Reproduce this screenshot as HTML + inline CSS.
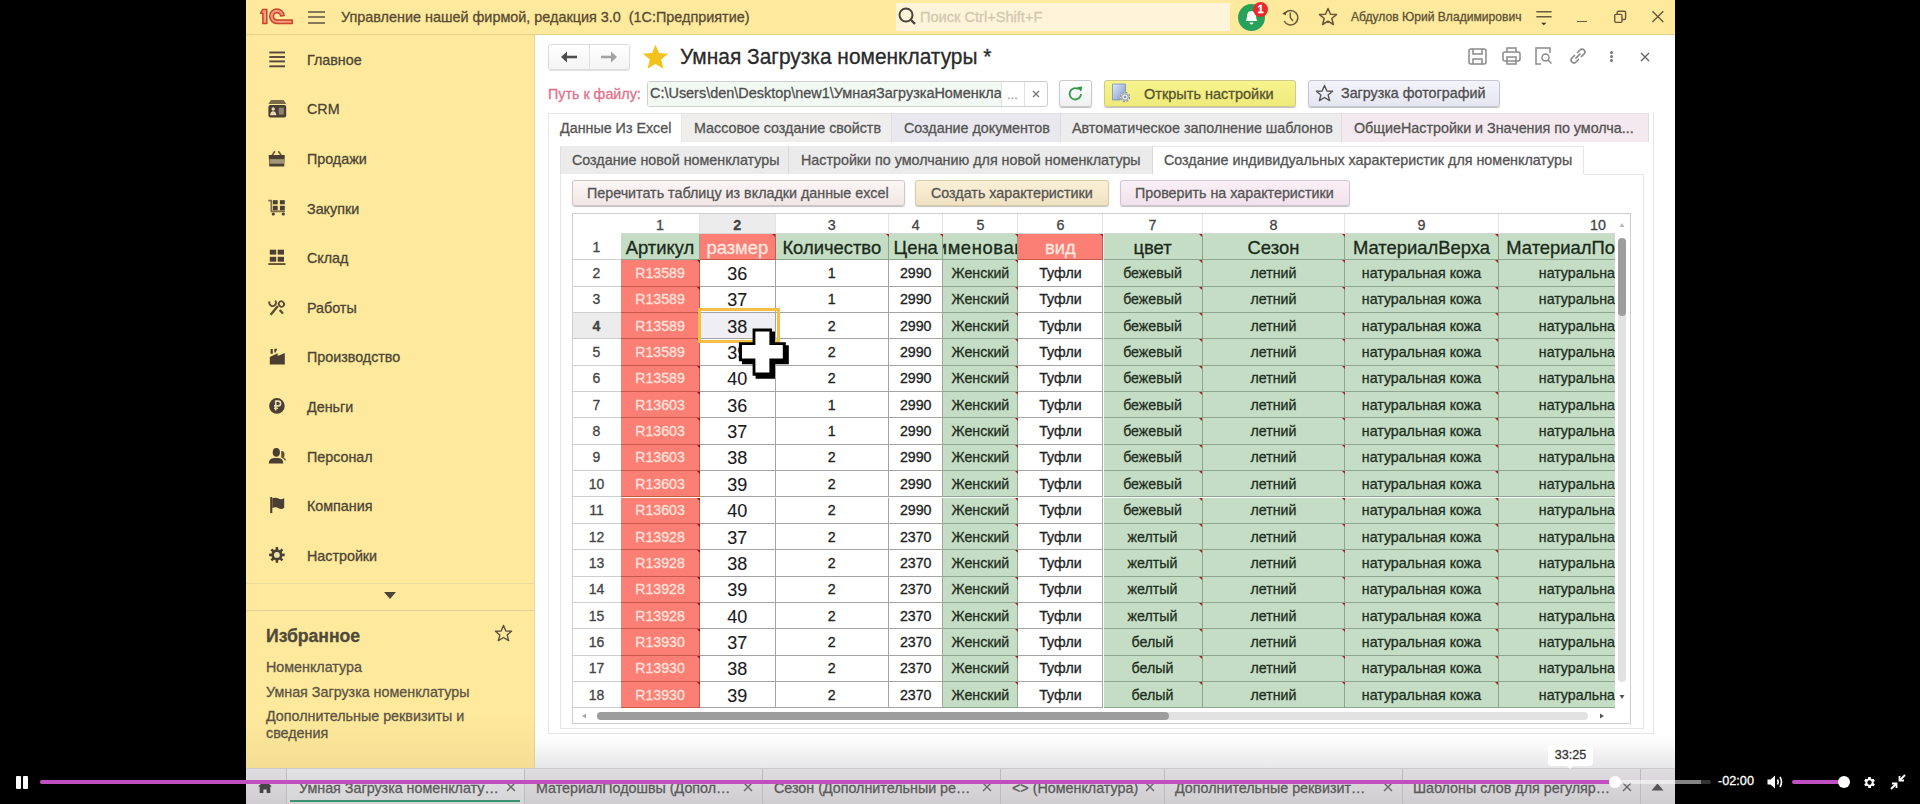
<!DOCTYPE html>
<html><head><meta charset="utf-8">
<style>
*{margin:0;padding:0;box-sizing:border-box}
html,body{width:1920px;height:804px;overflow:hidden;background:#000;font-family:"Liberation Sans",sans-serif;-webkit-text-stroke:0.3px currentColor}
.a{position:absolute}
#hdr{left:246px;top:0;width:1429px;height:34.6px;background:#fee99c;border-bottom:1.2px solid #e2d089}
#side{left:246px;top:35px;width:289px;height:733px;background:#fee99c;border-right:1px solid #e3d79f}
#main{left:535px;top:35px;width:1140px;height:733px;background:#fff}
.htxt{color:#5a5038;font-size:14.3px;white-space:nowrap}
.nav{position:absolute;left:307px;margin-top:1px;font-size:14.3px;color:#4a4535;white-space:nowrap}
.ico{position:absolute;left:268px;width:20px;height:20px}
.tab1{position:absolute;top:113px;height:29px;background:#ededed;border-right:1px solid #dedede;border-top:1px solid #e2e2e2;font-size:14.3px;color:#4d4d4d;white-space:nowrap;padding-top:6px}
.tab2{position:absolute;top:146px;height:28px;background:#ebebeb;border-right:1px solid #dadada;font-size:14.3px;color:#4d4d4d;white-space:nowrap;padding-top:6px}
.btn{position:absolute;height:26px;border:1px solid #c9c9c9;border-radius:3px;font-size:14.3px;color:#4d4d4d;white-space:nowrap;box-shadow:0 1px 1px rgba(0,0,0,.25)}
#tbl{left:572px;top:213.5px;width:1059px;height:511px;background:#fff;overflow:hidden}
#tblb{left:572px;top:213px;width:1059px;height:511px;border:1px solid #cfcfcf}
.mk{position:absolute;width:0;height:0;border-top:3.5px solid #a52125;border-left:3.5px solid transparent}
.mk2{border-top-color:#7a1a1a}
#grid{position:absolute;left:0;top:0;width:1045px;height:494px;overflow:hidden}
.ch{position:absolute;font-size:14.3px;color:#444;text-align:center;line-height:23px;border-right:1px solid #e4e4e4;border-bottom:1px solid #d6d6d6}
.rh{position:absolute;left:0;width:49px;font-size:14px;color:#444;display:flex;align-items:center;justify-content:center;border-bottom:1px solid #cfcfcf}
.hc,.dc{position:absolute;display:flex;align-items:center;justify-content:center;white-space:nowrap;overflow:hidden;border-right:1px solid #9aa39a;border-bottom:1px solid #9aa39a}
.hc{font-size:18.4px;color:#1a2a1a;padding-top:2px}
.hc.wt{color:#ffe8e0}
.dc{font-size:14.2px;color:#222}
.dc.ar{color:#ffe3dc}
.dc.big{font-size:18px;color:#1a1a1a;padding-top:3px;-webkit-text-stroke:0.1px currentColor}
.dc.gc{color:#1e2e1e}
.bt{position:absolute;top:780px;font-size:14.3px;color:#5a5a5a;white-space:nowrap}
.bx{top:782px;width:10px;height:10px;fill:none;stroke:#666;stroke-width:1.4}
.tb{position:absolute;font-size:14.3px;color:#545454;white-space:nowrap}
</style></head><body>
<!-- header -->
<div id="hdr" class="a"></div>
<svg class="a" style="left:255px;top:4px" width="45" height="26" viewBox="0 0 45 26"><g fill="#fb9b7f" stroke="#c7452a" stroke-width="1.5" stroke-linejoin="round"><path d="M7.9 19.6 V9.2 H5.6 L7.7 5.4 H11.8 V19.6Z"/><path d="M29.1 11.6 A7.2 7.2 0 1 0 21.9 19.4 H37.2 V15.9 H22 A3.6 3.6 0 1 1 25.6 12Z"/></g></svg>
<div class="a" style="left:308px;top:11px;width:17px;height:2px;background:#85795a"></div>
<div class="a" style="left:308px;top:16px;width:17px;height:2px;background:#85795a"></div>
<div class="a" style="left:308px;top:22px;width:17px;height:2px;background:#85795a"></div>
<div class="a htxt" style="left:341px;top:9px;color:#564b32;font-size:14.4px">Управление нашей фирмой, редакция 3.0&nbsp; (1С:Предприятие)</div>
<div class="a" style="left:896px;top:3px;width:334px;height:28px;background:#fdf4da"></div>
<svg class="a" style="left:898px;top:7px" width="20" height="20" viewBox="0 0 20 20"><circle cx="8" cy="8" r="6.5" fill="none" stroke="#4a4438" stroke-width="2"/><path d="M13 13 L17 17" stroke="#4a4438" stroke-width="2.4"/></svg>
<div class="a htxt" style="left:920px;top:9px;font-size:14.6px;color:#d3c9b0">Поиск Ctrl+Shift+F</div>
<!-- bell -->
<div class="a" style="left:1238px;top:4px;width:27px;height:27px;border-radius:50%;background:#27a25a"></div>
<svg class="a" style="left:1243px;top:9px" width="17" height="17" viewBox="0 0 17 17"><path d="M8.5 2 C5 2 4 5 4 8 L3 12 H14 L13 8 C13 5 12 2 8.5 2Z M6.5 13.5 H10.5 A2 2 0 0 1 6.5 13.5Z" fill="#fff"/></svg>
<div class="a" style="left:1253px;top:2px;width:15px;height:15px;border-radius:50%;background:#e8282b;color:#fff;font-size:11px;font-weight:bold;text-align:center;line-height:15px">1</div>
<svg class="a" style="left:1280px;top:7px" width="21" height="21" viewBox="0 0 21 21"><path d="M4.2 14 A7.2 7.2 0 1 0 5 6.2" fill="none" stroke="#6a5c3c" stroke-width="1.6"/><path d="M2.2 6.8 L5.6 4.6 L5.9 8.2Z" fill="#5a4c30"/><path d="M10.3 5.6 V10.6 L13 14" fill="none" stroke="#6a5c3c" stroke-width="1.5"/></svg>
<svg class="a" style="left:1318px;top:7px" width="20" height="20" viewBox="0 0 20 20"><path d="M10 1.5 L12.5 7.3 L18.5 7.6 L13.8 11.5 L15.4 17.5 L10 14.2 L4.6 17.5 L6.2 11.5 L1.5 7.6 L7.5 7.3Z" fill="none" stroke="#66573a" stroke-width="1.5" stroke-linejoin="round"/></svg>
<div class="a htxt" style="left:1351px;top:10px;font-size:12.1px;color:#5c5236">Абдулов Юрий Владимирович</div>
<svg class="a" style="left:1535px;top:8px" width="18" height="20" viewBox="0 0 18 20"><path d="M1.3 3.7 H16.6 M1.3 8.8 H16.6" stroke="#6a5c3c" stroke-width="1.4"/><path d="M6.2 14.7 H11.4 L8.8 17.2Z" fill="#3e3424"/></svg>
<div class="a" style="left:1577px;top:20.7px;width:10.2px;height:1.7px;background:#6a5c3c"></div>
<svg class="a" style="left:1612px;top:9px" width="16" height="16" viewBox="0 0 16 16" fill="none" stroke="#65573a" stroke-width="1.4"><rect x="2.7" y="5.4" width="7.3" height="8" rx="1.3"/><path d="M5.2 5.2 V3.4 Q5.2 2.2 6.4 2.2 H12.4 Q13.6 2.2 13.6 3.4 V9.3 Q13.6 10.5 12.4 10.5 H10.2"/></svg>
<svg class="a" style="left:1651px;top:10px" width="14" height="13" viewBox="0 0 14 13"><path d="M1.4 1.3 L12.3 11.9 M12.3 1.3 L1.4 11.9" stroke="#65573a" stroke-width="1.4"/></svg>

<!-- sidebar -->
<div id="side" class="a"></div>
<div class="nav" style="top:51px">Главное</div>
<div class="nav" style="top:100px">CRM</div>
<div class="nav" style="top:150px">Продажи</div>
<div class="nav" style="top:200px">Закупки</div>
<div class="nav" style="top:249px">Склад</div>
<div class="nav" style="top:299px">Работы</div>
<div class="nav" style="top:348px">Производство</div>
<div class="nav" style="top:398px">Деньги</div>
<div class="nav" style="top:448px">Персонал</div>
<div class="nav" style="top:497px">Компания</div>
<div class="nav" style="top:547px">Настройки</div>
<!-- sidebar icons -->
<svg class="ico" style="top:49px" viewBox="0 0 20 20" fill="#54483a"><rect x="1.3" y="2.55" width="15.7" height="1.9"/><rect x="1.3" y="7.05" width="15.7" height="1.9"/><rect x="1.3" y="11.45" width="15.7" height="1.9"/><rect x="1.3" y="16.35" width="15.7" height="1.9"/></svg>
<svg class="ico" style="top:99px" viewBox="0 0 20 20"><path d="M3 0.9 H15.6 L18.2 5 H0.4Z" fill="#7a6a48"/><rect x="0.4" y="6" width="17.8" height="12.4" rx="2" fill="#4a3f32"/><circle cx="5.2" cy="10" r="1.7" fill="#e6ddb4"/><path d="M2 16.2 Q2.5 12.3 5.2 12.3 Q7.9 12.3 8.4 16.2Z" fill="#e6ddb4"/><rect x="10.8" y="8.6" width="5" height="7" fill="#8e8474"/></svg>
<svg class="ico" style="top:149px" viewBox="0 0 20 20"><path d="M4.2 6.3 L6.9 2.3 M10.4 2.3 L13.1 6.3" stroke="#6e5e3a" stroke-width="1.7" fill="none"/><path d="M0.7 6 H16.8 L16.2 17.6 H1.3Z" fill="#4a3f32"/><rect x="1.5" y="10.1" width="14.5" height="4.6" fill="#a39674"/></svg>
<svg class="ico" style="top:198px" viewBox="0 0 20 20"><path d="M0.3 2.6 H3.3 V13.4 H17" stroke="#7d6c48" stroke-width="1.6" fill="none"/><g fill="#4a3f32"><rect x="4.8" y="2.2" width="4.9" height="4.1"/><rect x="11.9" y="2.2" width="4.9" height="4.1"/><rect x="4.8" y="7.8" width="4.9" height="4.5"/><rect x="11.9" y="7.8" width="4.9" height="4.5"/><circle cx="5.3" cy="16" r="1.6"/><circle cx="15.3" cy="16" r="1.6"/></g></svg>
<svg class="ico" style="top:247px" viewBox="0 0 20 20" fill="#4a3f32"><rect x="1.8" y="2.7" width="6.4" height="4.9"/><rect x="9.7" y="2.7" width="6.3" height="4.9"/><rect x="1.8" y="9.8" width="6.4" height="4.9"/><rect x="9.7" y="9.8" width="6.3" height="4.9"/><rect x="0.3" y="16.1" width="17.2" height="1.9" fill="#65552f"/></svg>
<svg class="ico" style="top:297px" viewBox="0 0 20 20" fill="none" stroke="#5a4c34" stroke-width="1.8"><path d="M1.6 4.3 A3.3 3.3 0 1 0 7.2 3.6"/><ellipse cx="13.4" cy="7" rx="2.5" ry="2.8" transform="rotate(-40 13.4 7)"/><path d="M2.6 17.8 L9.9 9" stroke-width="2.4"/><path d="M11.6 12.9 L15 16.6" stroke-width="2.2"/></svg>
<svg class="ico" style="top:346px" viewBox="0 0 20 20" fill="#4a3f32"><path d="M1.8 18.4 V11 L9.7 7.3 V10 L16.8 7 V18.4Z"/><path d="M2.6 3 H4.8 V7.8 H2.6Z"/><path d="M6.4 2.7 H9.2 L7.6 6.6 H6.4Z"/></svg>
<svg class="ico" style="top:396px" viewBox="0 0 20 20"><circle cx="8.9" cy="9.9" r="7.8" fill="#4a3f32"/><path d="M7.7 14.6 V5.1 H10.2 A2.4 2.4 0 0 1 10.2 9.9 H6 M6 12.3 H10" fill="none" stroke="#e6ddb4" stroke-width="1.6"/></svg>
<svg class="ico" style="top:446px" viewBox="0 0 20 20" fill="#4a3f32"><ellipse cx="8.3" cy="6.3" rx="3.6" ry="4.4"/><path d="M0.7 17.4 Q0.9 12.2 6 11.9 H10.6 Q15.1 12.2 15.3 17.4Z"/><path d="M13.2 5.2 Q16.3 4.6 16.5 8.4 Q16.5 11 15.5 11.6 Q17.6 12.6 18.3 14.2 L16.9 14.6 Q15.6 12.4 13.2 11.6Z" fill="#5e5034"/></svg>
<svg class="ico" style="top:495px" viewBox="0 0 20 20" fill="#4a3f32"><rect x="2.2" y="2.1" width="2.1" height="16"/><path d="M4.3 3.3 Q8 2 10.5 3.6 Q13.5 5.2 16.2 3 V12.7 Q13.5 14.8 10.5 13.2 Q8 11.6 4.3 13Z"/></svg>
<svg class="ico" style="top:545px" viewBox="0 0 20 20"><g fill="#4a3f32" transform="translate(8.9 9.9)"><circle r="5.6"/><rect x="-1.3" y="-7.8" width="2.6" height="15.6"/><rect x="-1.3" y="-7.8" width="2.6" height="15.6" transform="rotate(45)"/><rect x="-1.3" y="-7.8" width="2.6" height="15.6" transform="rotate(90)"/><rect x="-1.3" y="-7.8" width="2.6" height="15.6" transform="rotate(135)"/></g><circle cx="8.9" cy="9.9" r="2.9" fill="#efe2b0"/></svg>
<div class="a" style="left:246px;top:583px;width:288px;height:1px;background:#eadb9a"></div>
<svg class="a" style="left:383px;top:591px" width="14" height="9" viewBox="0 0 14 9"><path d="M1 1 H13 L7 8Z" fill="#4a4436"/></svg>
<div class="a" style="left:246px;top:610px;width:288px;height:1px;background:#ddd09a"></div>
<div class="a" style="left:266px;top:626px;font-size:17.6px;font-weight:bold;color:#4e493b;white-space:nowrap">Избранное</div>
<svg class="a" style="left:494px;top:624px" width="19" height="19" viewBox="0 0 20 20"><path d="M10 1.5 L12.5 7.3 L18.5 7.6 L13.8 11.5 L15.4 17.5 L10 14.2 L4.6 17.5 L6.2 11.5 L1.5 7.6 L7.5 7.3Z" fill="none" stroke="#5b5242" stroke-width="1.5" stroke-linejoin="round"/></svg>
<div class="a" style="left:266px;top:659px;font-size:14.3px;color:#5a5444;white-space:nowrap">Номенклатура</div>
<div class="a" style="left:266px;top:684px;font-size:14.3px;color:#5a5444;white-space:nowrap">Умная Загрузка номенклатуры</div>
<div class="a" style="left:266px;top:708px;font-size:14.3px;color:#5a5444;white-space:nowrap;line-height:17px">Дополнительные реквизиты и<br>сведения</div>

<!-- main -->
<div id="main" class="a"></div>
<div class="a" style="left:548px;top:44px;width:82px;height:26px;border:1px solid #dcdcdc;border-radius:3px;background:linear-gradient(#fff,#f4f4f4);box-shadow:0 1px 1px rgba(0,0,0,.12)"></div>
<div class="a" style="left:589px;top:45px;width:1px;height:25px;background:#e0e0e0"></div>
<svg class="a" style="left:560px;top:50px" width="18" height="14" viewBox="0 0 18 14"><path d="M17 7 H5" stroke="#4d4d4d" stroke-width="2.6"/><path d="M1 7 L7 1.5 V12.5Z" fill="#4d4d4d"/></svg>
<svg class="a" style="left:600px;top:50px" width="18" height="14" viewBox="0 0 18 14"><path d="M1 7 H13" stroke="#a3a3a3" stroke-width="2.6"/><path d="M17 7 L11 1.5 V12.5Z" fill="#a3a3a3"/></svg>
<svg class="a" style="left:642px;top:44px" width="27" height="26" viewBox="0 0 20 19"><path d="M10 0.5 L12.6 6.6 L19.3 7 L14.2 11.4 L15.9 18.2 L10 14.6 L4.1 18.2 L5.8 11.4 L0.7 7 L7.4 6.6Z" fill="#f4c21c"/></svg>
<div class="a" style="left:680px;top:43.5px;font-size:21.9px;color:#2a2a2a;white-space:nowrap;transform:scaleX(0.955);transform-origin:0 0">Умная Загрузка номенклатуры *</div>
<!-- toolbar icons -->
<svg class="a" style="left:1468px;top:48px" width="19" height="17" viewBox="0 0 19 17" fill="none" stroke="#8a8a8a" stroke-width="1.5"><rect x="1" y="1" width="17" height="15" rx="2"/><path d="M5 1 V6 H14 V1"/><path d="M5 16 V11 H14 V16"/></svg>
<svg class="a" style="left:1502px;top:47px" width="19" height="18" viewBox="0 0 19 18" fill="none" stroke="#8a8a8a" stroke-width="1.5"><rect x="1" y="5" width="17" height="9" rx="2"/><path d="M5 5 V1 H14 V5"/><rect x="5" y="10" width="9" height="7"/></svg>
<svg class="a" style="left:1535px;top:47px" width="18" height="18" viewBox="0 0 18 18" fill="none" stroke="#8a8a8a" stroke-width="1.5"><path d="M6 17 H1 V1 H15 V6"/><circle cx="10.5" cy="10.5" r="3.5"/><path d="M13 13 L16.5 16.5"/></svg>
<svg class="a" style="left:1569px;top:47px" width="18" height="18" viewBox="0 0 18 18" fill="none" stroke="#8a8a8a" stroke-width="1.7"><path d="M8 6 L11 3 A2.8 2.8 0 0 1 15 7 L12 10"/><path d="M10 12 L7 15 A2.8 2.8 0 0 1 3 11 L6 8"/><path d="M6.5 11.5 L11.5 6.5"/></svg>
<div class="a" style="left:1609.5px;top:50.5px;width:3.5px;height:3.5px;border-radius:50%;background:#777"></div>
<div class="a" style="left:1609.5px;top:54.5px;width:3.5px;height:3.5px;border-radius:50%;background:#777"></div>
<div class="a" style="left:1609.5px;top:58.5px;width:3.5px;height:3.5px;border-radius:50%;background:#777"></div>
<svg class="a" style="left:1640px;top:52px" width="10" height="10" viewBox="0 0 10 10"><path d="M1 1 L9 9 M9 1 L1 9" stroke="#666" stroke-width="1.4"/></svg>

<!-- path row -->
<div class="a" style="left:548px;top:86px;font-size:14.3px;color:#e2708a;white-space:nowrap">Путь к файлу:</div>
<div class="a" style="left:647px;top:81px;width:401px;height:26px;border:1px solid #cfcfcf;border-radius:3px;background:#fff"></div>
<div class="a" style="left:648px;top:82px;width:353px;height:24px;background:#f2f8f2;overflow:hidden;font-size:14.45px;color:#4e4e4e;white-space:nowrap;padding:3px 0 0 2px">C:\Users\den\Desktop\new1\УмнаяЗагрузкаНоменклатуры.xlsx</div>
<div class="a" style="left:1001px;top:82px;width:1px;height:24px;background:#e0e0e0"></div>
<div class="a" style="left:1024px;top:82px;width:1px;height:24px;background:#e0e0e0"></div>
<div class="a" style="left:1007px;top:87px;font-size:13px;color:#aaa">...</div>
<svg class="a" style="left:1031px;top:89px" width="10" height="10" viewBox="0 0 10 10"><path d="M2 2 L8 8 M8 2 L2 8" stroke="#777" stroke-width="1.3"/></svg>
<div class="btn" style="left:1059px;top:79.5px;width:33px;height:27.5px;background:linear-gradient(#fff,#f0f0f0)"></div>
<svg class="a" style="left:1066px;top:84px" width="19" height="19" viewBox="0 0 19 19"><path d="M15 10 A5.7 5.7 0 1 1 12.6 5.2" fill="none" stroke="#3a9e4e" stroke-width="1.9"/><path d="M11 3.2 L16.2 2.6 L15.2 7.8Z" fill="#2f9444"/></svg>
<div class="btn" style="left:1104px;top:79.5px;width:192px;height:27.5px;background:linear-gradient(#f8f48f,#eeea7a);border-color:#cfc98a"></div>
<svg class="a" style="left:1111px;top:83px" width="20" height="20" viewBox="0 0 20 20"><defs><linearGradient id="gb" x1="0" y1="0" x2="1" y2="1"><stop offset="0" stop-color="#dfe8f8"/><stop offset="1" stop-color="#7d96c8"/></linearGradient></defs><path d="M1.5 1 H14.5 V11 A5 5 0 0 0 9 17 H1.5Z" fill="url(#gb)" stroke="#7a8fb8" stroke-width="0.8"/><g transform="translate(14 14)"><circle r="4.6" fill="#d8dce2" stroke="#8c939c" stroke-width="1.1" stroke-dasharray="2 1.6"/><circle r="3.3" fill="#e6e9ee" stroke="#8c939c" stroke-width="0.9"/><circle r="1.2" fill="#8c939c"/></g></svg>
<div class="a" style="left:1144px;top:85.5px;font-size:14.5px;color:#56532e;white-space:nowrap">Открыть настройки</div>
<div class="btn" style="left:1308px;top:79.5px;width:192px;height:27.5px;background:linear-gradient(#f4f4fb,#e6e6f2);border-color:#c6c6d4"></div>
<svg class="a" style="left:1315px;top:84px" width="19" height="19" viewBox="0 0 20 20"><path d="M10 1.5 L12.5 7.3 L18.5 7.6 L13.8 11.5 L15.4 17.5 L10 14.2 L4.6 17.5 L6.2 11.5 L1.5 7.6 L7.5 7.3Z" fill="none" stroke="#555" stroke-width="1.5" stroke-linejoin="round"/></svg>
<div class="a" style="left:1341px;top:85px;font-size:14.3px;color:#4d4d4d;white-space:nowrap">Загрузка фотографий</div>

<!-- outer tabs -->
<div class="a" style="left:548px;top:113px;width:1106px;height:621px;border:1px solid #e6e6e6;border-top:none"></div>
<div class="tab1" style="left:548px;width:134px;background:#fff;border:1px solid #e6e6e6;border-bottom:none"></div>
<div class="tab1" style="left:682px;width:210px;background:#efeeed"></div>
<div class="tab1" style="left:892px;width:169px;background:#eae8ef"></div>
<div class="tab1" style="left:1061px;width:281px"></div>
<div class="tab1" style="left:1342px;width:307px;background:#f3e9ee"></div>
<div class="tb" style="left:560px;top:119.5px">Данные Из Excel</div>
<div class="tb" style="left:694px;top:119.5px">Массовое создание свойств</div>
<div class="tb" style="left:904px;top:119.5px">Создание документов</div>
<div class="tb" style="left:1072px;top:119.5px">Автоматическое заполнение шаблонов</div>
<div class="tb" style="left:1354px;top:119.5px">ОбщиеНастройки и Значения по умолча...</div>

<!-- inner tabs -->
<div class="a" style="left:560px;top:174px;width:1084px;height:555px;border:1px solid #e6e6e6;border-top:none"></div>
<div class="a" style="left:1584px;top:174px;width:60px;height:1px;background:#e6e6e6"></div>
<div class="tab2" style="left:560px;width:229px;border-left:1px solid #e0e0e0"></div>
<div class="tab2" style="left:789px;width:364px"></div>
<div class="tab2" style="left:1153px;width:431px;background:#fff;border-top:1px solid #e6e6e6;border-right:1px solid #e6e6e6"></div>
<div class="tb" style="left:572px;top:152px">Создание новой номенклатуры</div>
<div class="tb" style="left:801px;top:152px">Настройки по умолчанию для новой номенклатуры</div>
<div class="tb" style="left:1164px;top:152px">Создание индивидуальных характеристик для номенклатуры</div>

<!-- action buttons -->
<div class="btn" style="left:572px;top:179.5px;height:26.5px;width:333px;background:linear-gradient(#fdf6f6,#f1e6e6);border-color:#d0c8c8"></div>
<div class="tb" style="left:587px;top:185px">Перечитать таблицу из вкладки данные excel</div>
<div class="btn" style="left:915px;top:179.5px;height:26.5px;width:194px;background:linear-gradient(#fbf0d8,#f0e2c2);border-color:#d8cba8"></div>
<div class="tb" style="left:931px;top:185px">Создать характеристики</div>
<div class="btn" style="left:1120px;top:179.5px;height:26.5px;width:230px;background:linear-gradient(#fbf0f6,#f0e2ec);border-color:#d4c6d0"></div>
<div class="tb" style="left:1135px;top:185px">Проверить на характеристики</div>

<!-- table -->
<div id="tbl" class="a">
<div id="grid">
<div class="ch" style="left:49.0px;top:0;width:79.0px;height:20.5px;background:#fff;font-weight:normal">1</div>
<div class="ch" style="left:128.0px;top:0;width:75.6px;height:20.5px;background:#ececec;font-weight:bold">2</div>
<div class="ch" style="left:203.6px;top:0;width:113.4px;height:20.5px;background:#fff;font-weight:normal">3</div>
<div class="ch" style="left:317.0px;top:0;width:54.4px;height:20.5px;background:#fff;font-weight:normal">4</div>
<div class="ch" style="left:371.4px;top:0;width:75.0px;height:20.5px;background:#fff;font-weight:normal">5</div>
<div class="ch" style="left:446.4px;top:0;width:85.1px;height:20.5px;background:#fff;font-weight:normal">6</div>
<div class="ch" style="left:531.5px;top:0;width:99.0px;height:20.5px;background:#fff;font-weight:normal">7</div>
<div class="ch" style="left:630.5px;top:0;width:142.9px;height:20.5px;background:#fff;font-weight:normal">8</div>
<div class="ch" style="left:773.4px;top:0;width:153.2px;height:20.5px;background:#fff;font-weight:normal">9</div>
<div class="ch" style="left:926.6px;top:0;width:116.4px;height:20.5px;background:#fff;font-weight:normal;text-align:right;padding-right:9px;box-sizing:border-box;border-right:none">10</div>
<div class="rh" style="top:20.50px;height:26.35px;background:#fff;">1</div>
<div class="hc" style="left:49.0px;top:20.50px;width:79.0px;height:26.35px;background:#c5ddc4;border-color:#8ea58e"><span>Артикул</span></div>
<div class="hc wt" style="left:128.0px;top:20.50px;width:75.6px;height:26.35px;background:#fc7f75;border-color:#c8574c"><span>размер</span></div>
<div class="hc" style="left:203.6px;top:20.50px;width:113.4px;height:26.35px;background:#c5ddc4;border-color:#8ea58e"><span>Количество</span></div>
<div class="hc" style="left:317.0px;top:20.50px;width:54.4px;height:26.35px;background:#c5ddc4;border-color:#8ea58e"><span>Цена</span></div>
<div class="hc" style="left:371.4px;top:20.50px;width:75.0px;height:26.35px;background:#c5ddc4;border-color:#8ea58e"><span style="margin-left:-2px;letter-spacing:0.6px">Наименование</span></div>
<div class="hc wt" style="left:446.4px;top:20.50px;width:85.1px;height:26.35px;background:#fc7f75;border-color:#c8574c"><span>вид</span></div>
<div class="hc" style="left:531.5px;top:20.50px;width:99.0px;height:26.35px;background:#c5ddc4;border-color:#8ea58e"><span>цвет</span></div>
<div class="hc" style="left:630.5px;top:20.50px;width:142.9px;height:26.35px;background:#c5ddc4;border-color:#8ea58e"><span>Сезон</span></div>
<div class="hc" style="left:773.4px;top:20.50px;width:153.2px;height:26.35px;background:#c5ddc4;border-color:#8ea58e"><span>МатериалВерха</span></div>
<div class="hc" style="left:926.6px;top:20.50px;width:116.4px;height:26.35px;background:#c5ddc4;border-color:#8ea58e;justify-content:flex-end;border-right:none"><span>МатериалПо</span></div>
<div class="rh" style="top:46.85px;height:26.35px;background:#fff;">2</div>
<div class="dc ar" style="left:49.0px;top:46.85px;width:79.0px;height:26.35px;background:#fc7f75;border-color:#c8574c"><span>R13589</span></div>
<div class="dc big" style="left:128.0px;top:46.85px;width:75.6px;height:26.35px;background:#ffffff;border-color:#a4a4a4"><span>36</span></div>
<div class="dc" style="left:203.6px;top:46.85px;width:113.4px;height:26.35px;background:#ffffff;border-color:#a4a4a4"><span>1</span></div>
<div class="dc" style="left:317.0px;top:46.85px;width:54.4px;height:26.35px;background:#ffffff;border-color:#a4a4a4"><span>2990</span></div>
<div class="dc gc" style="left:371.4px;top:46.85px;width:75.0px;height:26.35px;background:#c5ddc4;border-color:#8ea58e"><span>Женский</span></div>
<div class="dc" style="left:446.4px;top:46.85px;width:85.1px;height:26.35px;background:#ffffff;border-color:#a4a4a4"><span>Туфли</span></div>
<div class="dc gc" style="left:531.5px;top:46.85px;width:99.0px;height:26.35px;background:#c5ddc4;border-color:#8ea58e"><span>бежевый</span></div>
<div class="dc gc" style="left:630.5px;top:46.85px;width:142.9px;height:26.35px;background:#c5ddc4;border-color:#8ea58e"><span>летний</span></div>
<div class="dc gc" style="left:773.4px;top:46.85px;width:153.2px;height:26.35px;background:#c5ddc4;border-color:#8ea58e"><span>натуральная кожа</span></div>
<div class="dc gc" style="left:926.6px;top:46.85px;width:116.4px;height:26.35px;background:#c5ddc4;border-color:#8ea58e;justify-content:flex-end;border-right:none"><span>натуральна</span></div>
<div class="rh" style="top:73.20px;height:26.35px;background:#fff;">3</div>
<div class="dc ar" style="left:49.0px;top:73.20px;width:79.0px;height:26.35px;background:#fc7f75;border-color:#c8574c"><span>R13589</span></div>
<div class="dc big" style="left:128.0px;top:73.20px;width:75.6px;height:26.35px;background:#ffffff;border-color:#a4a4a4"><span>37</span></div>
<div class="dc" style="left:203.6px;top:73.20px;width:113.4px;height:26.35px;background:#ffffff;border-color:#a4a4a4"><span>1</span></div>
<div class="dc" style="left:317.0px;top:73.20px;width:54.4px;height:26.35px;background:#ffffff;border-color:#a4a4a4"><span>2990</span></div>
<div class="dc gc" style="left:371.4px;top:73.20px;width:75.0px;height:26.35px;background:#c5ddc4;border-color:#8ea58e"><span>Женский</span></div>
<div class="dc" style="left:446.4px;top:73.20px;width:85.1px;height:26.35px;background:#ffffff;border-color:#a4a4a4"><span>Туфли</span></div>
<div class="dc gc" style="left:531.5px;top:73.20px;width:99.0px;height:26.35px;background:#c5ddc4;border-color:#8ea58e"><span>бежевый</span></div>
<div class="dc gc" style="left:630.5px;top:73.20px;width:142.9px;height:26.35px;background:#c5ddc4;border-color:#8ea58e"><span>летний</span></div>
<div class="dc gc" style="left:773.4px;top:73.20px;width:153.2px;height:26.35px;background:#c5ddc4;border-color:#8ea58e"><span>натуральная кожа</span></div>
<div class="dc gc" style="left:926.6px;top:73.20px;width:116.4px;height:26.35px;background:#c5ddc4;border-color:#8ea58e;justify-content:flex-end;border-right:none"><span>натуральна</span></div>
<div class="rh" style="top:99.55px;height:26.35px;background:#ececec;font-weight:bold;">4</div>
<div class="dc ar" style="left:49.0px;top:99.55px;width:79.0px;height:26.35px;background:#fc7f75;border-color:#c8574c"><span>R13589</span></div>
<div class="dc big" style="left:128.0px;top:99.55px;width:75.6px;height:26.35px;background:#efeef2;border-color:#a4a4a4"><span>38</span></div>
<div class="dc" style="left:203.6px;top:99.55px;width:113.4px;height:26.35px;background:#ffffff;border-color:#a4a4a4"><span>2</span></div>
<div class="dc" style="left:317.0px;top:99.55px;width:54.4px;height:26.35px;background:#ffffff;border-color:#a4a4a4"><span>2990</span></div>
<div class="dc gc" style="left:371.4px;top:99.55px;width:75.0px;height:26.35px;background:#c5ddc4;border-color:#8ea58e"><span>Женский</span></div>
<div class="dc" style="left:446.4px;top:99.55px;width:85.1px;height:26.35px;background:#ffffff;border-color:#a4a4a4"><span>Туфли</span></div>
<div class="dc gc" style="left:531.5px;top:99.55px;width:99.0px;height:26.35px;background:#c5ddc4;border-color:#8ea58e"><span>бежевый</span></div>
<div class="dc gc" style="left:630.5px;top:99.55px;width:142.9px;height:26.35px;background:#c5ddc4;border-color:#8ea58e"><span>летний</span></div>
<div class="dc gc" style="left:773.4px;top:99.55px;width:153.2px;height:26.35px;background:#c5ddc4;border-color:#8ea58e"><span>натуральная кожа</span></div>
<div class="dc gc" style="left:926.6px;top:99.55px;width:116.4px;height:26.35px;background:#c5ddc4;border-color:#8ea58e;justify-content:flex-end;border-right:none"><span>натуральна</span></div>
<div class="rh" style="top:125.90px;height:26.35px;background:#fff;">5</div>
<div class="dc ar" style="left:49.0px;top:125.90px;width:79.0px;height:26.35px;background:#fc7f75;border-color:#c8574c"><span>R13589</span></div>
<div class="dc big" style="left:128.0px;top:125.90px;width:75.6px;height:26.35px;background:#ffffff;border-color:#a4a4a4"><span>39</span></div>
<div class="dc" style="left:203.6px;top:125.90px;width:113.4px;height:26.35px;background:#ffffff;border-color:#a4a4a4"><span>2</span></div>
<div class="dc" style="left:317.0px;top:125.90px;width:54.4px;height:26.35px;background:#ffffff;border-color:#a4a4a4"><span>2990</span></div>
<div class="dc gc" style="left:371.4px;top:125.90px;width:75.0px;height:26.35px;background:#c5ddc4;border-color:#8ea58e"><span>Женский</span></div>
<div class="dc" style="left:446.4px;top:125.90px;width:85.1px;height:26.35px;background:#ffffff;border-color:#a4a4a4"><span>Туфли</span></div>
<div class="dc gc" style="left:531.5px;top:125.90px;width:99.0px;height:26.35px;background:#c5ddc4;border-color:#8ea58e"><span>бежевый</span></div>
<div class="dc gc" style="left:630.5px;top:125.90px;width:142.9px;height:26.35px;background:#c5ddc4;border-color:#8ea58e"><span>летний</span></div>
<div class="dc gc" style="left:773.4px;top:125.90px;width:153.2px;height:26.35px;background:#c5ddc4;border-color:#8ea58e"><span>натуральная кожа</span></div>
<div class="dc gc" style="left:926.6px;top:125.90px;width:116.4px;height:26.35px;background:#c5ddc4;border-color:#8ea58e;justify-content:flex-end;border-right:none"><span>натуральна</span></div>
<div class="rh" style="top:152.25px;height:26.35px;background:#fff;">6</div>
<div class="dc ar" style="left:49.0px;top:152.25px;width:79.0px;height:26.35px;background:#fc7f75;border-color:#c8574c"><span>R13589</span></div>
<div class="dc big" style="left:128.0px;top:152.25px;width:75.6px;height:26.35px;background:#ffffff;border-color:#a4a4a4"><span>40</span></div>
<div class="dc" style="left:203.6px;top:152.25px;width:113.4px;height:26.35px;background:#ffffff;border-color:#a4a4a4"><span>2</span></div>
<div class="dc" style="left:317.0px;top:152.25px;width:54.4px;height:26.35px;background:#ffffff;border-color:#a4a4a4"><span>2990</span></div>
<div class="dc gc" style="left:371.4px;top:152.25px;width:75.0px;height:26.35px;background:#c5ddc4;border-color:#8ea58e"><span>Женский</span></div>
<div class="dc" style="left:446.4px;top:152.25px;width:85.1px;height:26.35px;background:#ffffff;border-color:#a4a4a4"><span>Туфли</span></div>
<div class="dc gc" style="left:531.5px;top:152.25px;width:99.0px;height:26.35px;background:#c5ddc4;border-color:#8ea58e"><span>бежевый</span></div>
<div class="dc gc" style="left:630.5px;top:152.25px;width:142.9px;height:26.35px;background:#c5ddc4;border-color:#8ea58e"><span>летний</span></div>
<div class="dc gc" style="left:773.4px;top:152.25px;width:153.2px;height:26.35px;background:#c5ddc4;border-color:#8ea58e"><span>натуральная кожа</span></div>
<div class="dc gc" style="left:926.6px;top:152.25px;width:116.4px;height:26.35px;background:#c5ddc4;border-color:#8ea58e;justify-content:flex-end;border-right:none"><span>натуральна</span></div>
<div class="rh" style="top:178.60px;height:26.35px;background:#fff;">7</div>
<div class="dc ar" style="left:49.0px;top:178.60px;width:79.0px;height:26.35px;background:#fc7f75;border-color:#c8574c"><span>R13603</span></div>
<div class="dc big" style="left:128.0px;top:178.60px;width:75.6px;height:26.35px;background:#ffffff;border-color:#a4a4a4"><span>36</span></div>
<div class="dc" style="left:203.6px;top:178.60px;width:113.4px;height:26.35px;background:#ffffff;border-color:#a4a4a4"><span>1</span></div>
<div class="dc" style="left:317.0px;top:178.60px;width:54.4px;height:26.35px;background:#ffffff;border-color:#a4a4a4"><span>2990</span></div>
<div class="dc gc" style="left:371.4px;top:178.60px;width:75.0px;height:26.35px;background:#c5ddc4;border-color:#8ea58e"><span>Женский</span></div>
<div class="dc" style="left:446.4px;top:178.60px;width:85.1px;height:26.35px;background:#ffffff;border-color:#a4a4a4"><span>Туфли</span></div>
<div class="dc gc" style="left:531.5px;top:178.60px;width:99.0px;height:26.35px;background:#c5ddc4;border-color:#8ea58e"><span>бежевый</span></div>
<div class="dc gc" style="left:630.5px;top:178.60px;width:142.9px;height:26.35px;background:#c5ddc4;border-color:#8ea58e"><span>летний</span></div>
<div class="dc gc" style="left:773.4px;top:178.60px;width:153.2px;height:26.35px;background:#c5ddc4;border-color:#8ea58e"><span>натуральная кожа</span></div>
<div class="dc gc" style="left:926.6px;top:178.60px;width:116.4px;height:26.35px;background:#c5ddc4;border-color:#8ea58e;justify-content:flex-end;border-right:none"><span>натуральна</span></div>
<div class="rh" style="top:204.95px;height:26.35px;background:#fff;">8</div>
<div class="dc ar" style="left:49.0px;top:204.95px;width:79.0px;height:26.35px;background:#fc7f75;border-color:#c8574c"><span>R13603</span></div>
<div class="dc big" style="left:128.0px;top:204.95px;width:75.6px;height:26.35px;background:#ffffff;border-color:#a4a4a4"><span>37</span></div>
<div class="dc" style="left:203.6px;top:204.95px;width:113.4px;height:26.35px;background:#ffffff;border-color:#a4a4a4"><span>1</span></div>
<div class="dc" style="left:317.0px;top:204.95px;width:54.4px;height:26.35px;background:#ffffff;border-color:#a4a4a4"><span>2990</span></div>
<div class="dc gc" style="left:371.4px;top:204.95px;width:75.0px;height:26.35px;background:#c5ddc4;border-color:#8ea58e"><span>Женский</span></div>
<div class="dc" style="left:446.4px;top:204.95px;width:85.1px;height:26.35px;background:#ffffff;border-color:#a4a4a4"><span>Туфли</span></div>
<div class="dc gc" style="left:531.5px;top:204.95px;width:99.0px;height:26.35px;background:#c5ddc4;border-color:#8ea58e"><span>бежевый</span></div>
<div class="dc gc" style="left:630.5px;top:204.95px;width:142.9px;height:26.35px;background:#c5ddc4;border-color:#8ea58e"><span>летний</span></div>
<div class="dc gc" style="left:773.4px;top:204.95px;width:153.2px;height:26.35px;background:#c5ddc4;border-color:#8ea58e"><span>натуральная кожа</span></div>
<div class="dc gc" style="left:926.6px;top:204.95px;width:116.4px;height:26.35px;background:#c5ddc4;border-color:#8ea58e;justify-content:flex-end;border-right:none"><span>натуральна</span></div>
<div class="rh" style="top:231.30px;height:26.35px;background:#fff;">9</div>
<div class="dc ar" style="left:49.0px;top:231.30px;width:79.0px;height:26.35px;background:#fc7f75;border-color:#c8574c"><span>R13603</span></div>
<div class="dc big" style="left:128.0px;top:231.30px;width:75.6px;height:26.35px;background:#ffffff;border-color:#a4a4a4"><span>38</span></div>
<div class="dc" style="left:203.6px;top:231.30px;width:113.4px;height:26.35px;background:#ffffff;border-color:#a4a4a4"><span>2</span></div>
<div class="dc" style="left:317.0px;top:231.30px;width:54.4px;height:26.35px;background:#ffffff;border-color:#a4a4a4"><span>2990</span></div>
<div class="dc gc" style="left:371.4px;top:231.30px;width:75.0px;height:26.35px;background:#c5ddc4;border-color:#8ea58e"><span>Женский</span></div>
<div class="dc" style="left:446.4px;top:231.30px;width:85.1px;height:26.35px;background:#ffffff;border-color:#a4a4a4"><span>Туфли</span></div>
<div class="dc gc" style="left:531.5px;top:231.30px;width:99.0px;height:26.35px;background:#c5ddc4;border-color:#8ea58e"><span>бежевый</span></div>
<div class="dc gc" style="left:630.5px;top:231.30px;width:142.9px;height:26.35px;background:#c5ddc4;border-color:#8ea58e"><span>летний</span></div>
<div class="dc gc" style="left:773.4px;top:231.30px;width:153.2px;height:26.35px;background:#c5ddc4;border-color:#8ea58e"><span>натуральная кожа</span></div>
<div class="dc gc" style="left:926.6px;top:231.30px;width:116.4px;height:26.35px;background:#c5ddc4;border-color:#8ea58e;justify-content:flex-end;border-right:none"><span>натуральна</span></div>
<div class="rh" style="top:257.65px;height:26.35px;background:#fff;">10</div>
<div class="dc ar" style="left:49.0px;top:257.65px;width:79.0px;height:26.35px;background:#fc7f75;border-color:#c8574c"><span>R13603</span></div>
<div class="dc big" style="left:128.0px;top:257.65px;width:75.6px;height:26.35px;background:#ffffff;border-color:#a4a4a4"><span>39</span></div>
<div class="dc" style="left:203.6px;top:257.65px;width:113.4px;height:26.35px;background:#ffffff;border-color:#a4a4a4"><span>2</span></div>
<div class="dc" style="left:317.0px;top:257.65px;width:54.4px;height:26.35px;background:#ffffff;border-color:#a4a4a4"><span>2990</span></div>
<div class="dc gc" style="left:371.4px;top:257.65px;width:75.0px;height:26.35px;background:#c5ddc4;border-color:#8ea58e"><span>Женский</span></div>
<div class="dc" style="left:446.4px;top:257.65px;width:85.1px;height:26.35px;background:#ffffff;border-color:#a4a4a4"><span>Туфли</span></div>
<div class="dc gc" style="left:531.5px;top:257.65px;width:99.0px;height:26.35px;background:#c5ddc4;border-color:#8ea58e"><span>бежевый</span></div>
<div class="dc gc" style="left:630.5px;top:257.65px;width:142.9px;height:26.35px;background:#c5ddc4;border-color:#8ea58e"><span>летний</span></div>
<div class="dc gc" style="left:773.4px;top:257.65px;width:153.2px;height:26.35px;background:#c5ddc4;border-color:#8ea58e"><span>натуральная кожа</span></div>
<div class="dc gc" style="left:926.6px;top:257.65px;width:116.4px;height:26.35px;background:#c5ddc4;border-color:#8ea58e;justify-content:flex-end;border-right:none"><span>натуральна</span></div>
<div class="rh" style="top:284.00px;height:26.35px;background:#fff;">11</div>
<div class="dc ar" style="left:49.0px;top:284.00px;width:79.0px;height:26.35px;background:#fc7f75;border-color:#c8574c"><span>R13603</span></div>
<div class="dc big" style="left:128.0px;top:284.00px;width:75.6px;height:26.35px;background:#ffffff;border-color:#a4a4a4"><span>40</span></div>
<div class="dc" style="left:203.6px;top:284.00px;width:113.4px;height:26.35px;background:#ffffff;border-color:#a4a4a4"><span>2</span></div>
<div class="dc" style="left:317.0px;top:284.00px;width:54.4px;height:26.35px;background:#ffffff;border-color:#a4a4a4"><span>2990</span></div>
<div class="dc gc" style="left:371.4px;top:284.00px;width:75.0px;height:26.35px;background:#c5ddc4;border-color:#8ea58e"><span>Женский</span></div>
<div class="dc" style="left:446.4px;top:284.00px;width:85.1px;height:26.35px;background:#ffffff;border-color:#a4a4a4"><span>Туфли</span></div>
<div class="dc gc" style="left:531.5px;top:284.00px;width:99.0px;height:26.35px;background:#c5ddc4;border-color:#8ea58e"><span>бежевый</span></div>
<div class="dc gc" style="left:630.5px;top:284.00px;width:142.9px;height:26.35px;background:#c5ddc4;border-color:#8ea58e"><span>летний</span></div>
<div class="dc gc" style="left:773.4px;top:284.00px;width:153.2px;height:26.35px;background:#c5ddc4;border-color:#8ea58e"><span>натуральная кожа</span></div>
<div class="dc gc" style="left:926.6px;top:284.00px;width:116.4px;height:26.35px;background:#c5ddc4;border-color:#8ea58e;justify-content:flex-end;border-right:none"><span>натуральна</span></div>
<div class="rh" style="top:310.35px;height:26.35px;background:#fff;">12</div>
<div class="dc ar" style="left:49.0px;top:310.35px;width:79.0px;height:26.35px;background:#fc7f75;border-color:#c8574c"><span>R13928</span></div>
<div class="dc big" style="left:128.0px;top:310.35px;width:75.6px;height:26.35px;background:#ffffff;border-color:#a4a4a4"><span>37</span></div>
<div class="dc" style="left:203.6px;top:310.35px;width:113.4px;height:26.35px;background:#ffffff;border-color:#a4a4a4"><span>2</span></div>
<div class="dc" style="left:317.0px;top:310.35px;width:54.4px;height:26.35px;background:#ffffff;border-color:#a4a4a4"><span>2370</span></div>
<div class="dc gc" style="left:371.4px;top:310.35px;width:75.0px;height:26.35px;background:#c5ddc4;border-color:#8ea58e"><span>Женский</span></div>
<div class="dc" style="left:446.4px;top:310.35px;width:85.1px;height:26.35px;background:#ffffff;border-color:#a4a4a4"><span>Туфли</span></div>
<div class="dc gc" style="left:531.5px;top:310.35px;width:99.0px;height:26.35px;background:#c5ddc4;border-color:#8ea58e"><span>желтый</span></div>
<div class="dc gc" style="left:630.5px;top:310.35px;width:142.9px;height:26.35px;background:#c5ddc4;border-color:#8ea58e"><span>летний</span></div>
<div class="dc gc" style="left:773.4px;top:310.35px;width:153.2px;height:26.35px;background:#c5ddc4;border-color:#8ea58e"><span>натуральная кожа</span></div>
<div class="dc gc" style="left:926.6px;top:310.35px;width:116.4px;height:26.35px;background:#c5ddc4;border-color:#8ea58e;justify-content:flex-end;border-right:none"><span>натуральна</span></div>
<div class="rh" style="top:336.70px;height:26.35px;background:#fff;">13</div>
<div class="dc ar" style="left:49.0px;top:336.70px;width:79.0px;height:26.35px;background:#fc7f75;border-color:#c8574c"><span>R13928</span></div>
<div class="dc big" style="left:128.0px;top:336.70px;width:75.6px;height:26.35px;background:#ffffff;border-color:#a4a4a4"><span>38</span></div>
<div class="dc" style="left:203.6px;top:336.70px;width:113.4px;height:26.35px;background:#ffffff;border-color:#a4a4a4"><span>2</span></div>
<div class="dc" style="left:317.0px;top:336.70px;width:54.4px;height:26.35px;background:#ffffff;border-color:#a4a4a4"><span>2370</span></div>
<div class="dc gc" style="left:371.4px;top:336.70px;width:75.0px;height:26.35px;background:#c5ddc4;border-color:#8ea58e"><span>Женский</span></div>
<div class="dc" style="left:446.4px;top:336.70px;width:85.1px;height:26.35px;background:#ffffff;border-color:#a4a4a4"><span>Туфли</span></div>
<div class="dc gc" style="left:531.5px;top:336.70px;width:99.0px;height:26.35px;background:#c5ddc4;border-color:#8ea58e"><span>желтый</span></div>
<div class="dc gc" style="left:630.5px;top:336.70px;width:142.9px;height:26.35px;background:#c5ddc4;border-color:#8ea58e"><span>летний</span></div>
<div class="dc gc" style="left:773.4px;top:336.70px;width:153.2px;height:26.35px;background:#c5ddc4;border-color:#8ea58e"><span>натуральная кожа</span></div>
<div class="dc gc" style="left:926.6px;top:336.70px;width:116.4px;height:26.35px;background:#c5ddc4;border-color:#8ea58e;justify-content:flex-end;border-right:none"><span>натуральна</span></div>
<div class="rh" style="top:363.05px;height:26.35px;background:#fff;">14</div>
<div class="dc ar" style="left:49.0px;top:363.05px;width:79.0px;height:26.35px;background:#fc7f75;border-color:#c8574c"><span>R13928</span></div>
<div class="dc big" style="left:128.0px;top:363.05px;width:75.6px;height:26.35px;background:#ffffff;border-color:#a4a4a4"><span>39</span></div>
<div class="dc" style="left:203.6px;top:363.05px;width:113.4px;height:26.35px;background:#ffffff;border-color:#a4a4a4"><span>2</span></div>
<div class="dc" style="left:317.0px;top:363.05px;width:54.4px;height:26.35px;background:#ffffff;border-color:#a4a4a4"><span>2370</span></div>
<div class="dc gc" style="left:371.4px;top:363.05px;width:75.0px;height:26.35px;background:#c5ddc4;border-color:#8ea58e"><span>Женский</span></div>
<div class="dc" style="left:446.4px;top:363.05px;width:85.1px;height:26.35px;background:#ffffff;border-color:#a4a4a4"><span>Туфли</span></div>
<div class="dc gc" style="left:531.5px;top:363.05px;width:99.0px;height:26.35px;background:#c5ddc4;border-color:#8ea58e"><span>желтый</span></div>
<div class="dc gc" style="left:630.5px;top:363.05px;width:142.9px;height:26.35px;background:#c5ddc4;border-color:#8ea58e"><span>летний</span></div>
<div class="dc gc" style="left:773.4px;top:363.05px;width:153.2px;height:26.35px;background:#c5ddc4;border-color:#8ea58e"><span>натуральная кожа</span></div>
<div class="dc gc" style="left:926.6px;top:363.05px;width:116.4px;height:26.35px;background:#c5ddc4;border-color:#8ea58e;justify-content:flex-end;border-right:none"><span>натуральна</span></div>
<div class="rh" style="top:389.40px;height:26.35px;background:#fff;">15</div>
<div class="dc ar" style="left:49.0px;top:389.40px;width:79.0px;height:26.35px;background:#fc7f75;border-color:#c8574c"><span>R13928</span></div>
<div class="dc big" style="left:128.0px;top:389.40px;width:75.6px;height:26.35px;background:#ffffff;border-color:#a4a4a4"><span>40</span></div>
<div class="dc" style="left:203.6px;top:389.40px;width:113.4px;height:26.35px;background:#ffffff;border-color:#a4a4a4"><span>2</span></div>
<div class="dc" style="left:317.0px;top:389.40px;width:54.4px;height:26.35px;background:#ffffff;border-color:#a4a4a4"><span>2370</span></div>
<div class="dc gc" style="left:371.4px;top:389.40px;width:75.0px;height:26.35px;background:#c5ddc4;border-color:#8ea58e"><span>Женский</span></div>
<div class="dc" style="left:446.4px;top:389.40px;width:85.1px;height:26.35px;background:#ffffff;border-color:#a4a4a4"><span>Туфли</span></div>
<div class="dc gc" style="left:531.5px;top:389.40px;width:99.0px;height:26.35px;background:#c5ddc4;border-color:#8ea58e"><span>желтый</span></div>
<div class="dc gc" style="left:630.5px;top:389.40px;width:142.9px;height:26.35px;background:#c5ddc4;border-color:#8ea58e"><span>летний</span></div>
<div class="dc gc" style="left:773.4px;top:389.40px;width:153.2px;height:26.35px;background:#c5ddc4;border-color:#8ea58e"><span>натуральная кожа</span></div>
<div class="dc gc" style="left:926.6px;top:389.40px;width:116.4px;height:26.35px;background:#c5ddc4;border-color:#8ea58e;justify-content:flex-end;border-right:none"><span>натуральна</span></div>
<div class="rh" style="top:415.75px;height:26.35px;background:#fff;">16</div>
<div class="dc ar" style="left:49.0px;top:415.75px;width:79.0px;height:26.35px;background:#fc7f75;border-color:#c8574c"><span>R13930</span></div>
<div class="dc big" style="left:128.0px;top:415.75px;width:75.6px;height:26.35px;background:#ffffff;border-color:#a4a4a4"><span>37</span></div>
<div class="dc" style="left:203.6px;top:415.75px;width:113.4px;height:26.35px;background:#ffffff;border-color:#a4a4a4"><span>2</span></div>
<div class="dc" style="left:317.0px;top:415.75px;width:54.4px;height:26.35px;background:#ffffff;border-color:#a4a4a4"><span>2370</span></div>
<div class="dc gc" style="left:371.4px;top:415.75px;width:75.0px;height:26.35px;background:#c5ddc4;border-color:#8ea58e"><span>Женский</span></div>
<div class="dc" style="left:446.4px;top:415.75px;width:85.1px;height:26.35px;background:#ffffff;border-color:#a4a4a4"><span>Туфли</span></div>
<div class="dc gc" style="left:531.5px;top:415.75px;width:99.0px;height:26.35px;background:#c5ddc4;border-color:#8ea58e"><span>белый</span></div>
<div class="dc gc" style="left:630.5px;top:415.75px;width:142.9px;height:26.35px;background:#c5ddc4;border-color:#8ea58e"><span>летний</span></div>
<div class="dc gc" style="left:773.4px;top:415.75px;width:153.2px;height:26.35px;background:#c5ddc4;border-color:#8ea58e"><span>натуральная кожа</span></div>
<div class="dc gc" style="left:926.6px;top:415.75px;width:116.4px;height:26.35px;background:#c5ddc4;border-color:#8ea58e;justify-content:flex-end;border-right:none"><span>натуральна</span></div>
<div class="rh" style="top:442.10px;height:26.35px;background:#fff;">17</div>
<div class="dc ar" style="left:49.0px;top:442.10px;width:79.0px;height:26.35px;background:#fc7f75;border-color:#c8574c"><span>R13930</span></div>
<div class="dc big" style="left:128.0px;top:442.10px;width:75.6px;height:26.35px;background:#ffffff;border-color:#a4a4a4"><span>38</span></div>
<div class="dc" style="left:203.6px;top:442.10px;width:113.4px;height:26.35px;background:#ffffff;border-color:#a4a4a4"><span>2</span></div>
<div class="dc" style="left:317.0px;top:442.10px;width:54.4px;height:26.35px;background:#ffffff;border-color:#a4a4a4"><span>2370</span></div>
<div class="dc gc" style="left:371.4px;top:442.10px;width:75.0px;height:26.35px;background:#c5ddc4;border-color:#8ea58e"><span>Женский</span></div>
<div class="dc" style="left:446.4px;top:442.10px;width:85.1px;height:26.35px;background:#ffffff;border-color:#a4a4a4"><span>Туфли</span></div>
<div class="dc gc" style="left:531.5px;top:442.10px;width:99.0px;height:26.35px;background:#c5ddc4;border-color:#8ea58e"><span>белый</span></div>
<div class="dc gc" style="left:630.5px;top:442.10px;width:142.9px;height:26.35px;background:#c5ddc4;border-color:#8ea58e"><span>летний</span></div>
<div class="dc gc" style="left:773.4px;top:442.10px;width:153.2px;height:26.35px;background:#c5ddc4;border-color:#8ea58e"><span>натуральная кожа</span></div>
<div class="dc gc" style="left:926.6px;top:442.10px;width:116.4px;height:26.35px;background:#c5ddc4;border-color:#8ea58e;justify-content:flex-end;border-right:none"><span>натуральна</span></div>
<div class="rh" style="top:468.45px;height:26.35px;background:#fff;">18</div>
<div class="dc ar" style="left:49.0px;top:468.45px;width:79.0px;height:26.35px;background:#fc7f75;border-color:#c8574c"><span>R13930</span></div>
<div class="dc big" style="left:128.0px;top:468.45px;width:75.6px;height:26.35px;background:#ffffff;border-color:#a4a4a4"><span>39</span></div>
<div class="dc" style="left:203.6px;top:468.45px;width:113.4px;height:26.35px;background:#ffffff;border-color:#a4a4a4"><span>2</span></div>
<div class="dc" style="left:317.0px;top:468.45px;width:54.4px;height:26.35px;background:#ffffff;border-color:#a4a4a4"><span>2370</span></div>
<div class="dc gc" style="left:371.4px;top:468.45px;width:75.0px;height:26.35px;background:#c5ddc4;border-color:#8ea58e"><span>Женский</span></div>
<div class="dc" style="left:446.4px;top:468.45px;width:85.1px;height:26.35px;background:#ffffff;border-color:#a4a4a4"><span>Туфли</span></div>
<div class="dc gc" style="left:531.5px;top:468.45px;width:99.0px;height:26.35px;background:#c5ddc4;border-color:#8ea58e"><span>белый</span></div>
<div class="dc gc" style="left:630.5px;top:468.45px;width:142.9px;height:26.35px;background:#c5ddc4;border-color:#8ea58e"><span>летний</span></div>
<div class="dc gc" style="left:773.4px;top:468.45px;width:153.2px;height:26.35px;background:#c5ddc4;border-color:#8ea58e"><span>натуральная кожа</span></div>
<div class="dc gc" style="left:926.6px;top:468.45px;width:116.4px;height:26.35px;background:#c5ddc4;border-color:#8ea58e;justify-content:flex-end;border-right:none"><span>натуральна</span></div>
<div class="mk" style="left:200.1px;top:20.50px"></div>
<div class="mk" style="left:313.5px;top:20.50px"></div>
<div class="mk" style="left:367.9px;top:20.50px"></div>
<div class="mk" style="left:442.9px;top:20.50px"></div>
<div class="mk" style="left:528.0px;top:20.50px"></div>
<div class="mk" style="left:627.0px;top:20.50px"></div>
<div class="mk" style="left:769.9px;top:20.50px"></div>
<div class="mk" style="left:923.1px;top:20.50px"></div>
<div class="mk mk2" style="left:124.5px;top:46.85px"></div>
<div class="mk" style="left:442.9px;top:46.85px"></div>
<div class="mk" style="left:627.0px;top:46.85px"></div>
<div class="mk" style="left:769.9px;top:46.85px"></div>
<div class="mk" style="left:923.1px;top:46.85px"></div>
<div class="mk mk2" style="left:124.5px;top:73.20px"></div>
<div class="mk" style="left:442.9px;top:73.20px"></div>
<div class="mk" style="left:627.0px;top:73.20px"></div>
<div class="mk" style="left:769.9px;top:73.20px"></div>
<div class="mk" style="left:923.1px;top:73.20px"></div>
<div class="mk mk2" style="left:124.5px;top:99.55px"></div>
<div class="mk" style="left:442.9px;top:99.55px"></div>
<div class="mk" style="left:627.0px;top:99.55px"></div>
<div class="mk" style="left:769.9px;top:99.55px"></div>
<div class="mk" style="left:923.1px;top:99.55px"></div>
<div class="mk mk2" style="left:124.5px;top:125.90px"></div>
<div class="mk" style="left:442.9px;top:125.90px"></div>
<div class="mk" style="left:627.0px;top:125.90px"></div>
<div class="mk" style="left:769.9px;top:125.90px"></div>
<div class="mk" style="left:923.1px;top:125.90px"></div>
<div class="mk mk2" style="left:124.5px;top:152.25px"></div>
<div class="mk" style="left:442.9px;top:152.25px"></div>
<div class="mk" style="left:627.0px;top:152.25px"></div>
<div class="mk" style="left:769.9px;top:152.25px"></div>
<div class="mk" style="left:923.1px;top:152.25px"></div>
<div class="mk mk2" style="left:124.5px;top:178.60px"></div>
<div class="mk" style="left:442.9px;top:178.60px"></div>
<div class="mk" style="left:627.0px;top:178.60px"></div>
<div class="mk" style="left:769.9px;top:178.60px"></div>
<div class="mk" style="left:923.1px;top:178.60px"></div>
<div class="mk mk2" style="left:124.5px;top:204.95px"></div>
<div class="mk" style="left:442.9px;top:204.95px"></div>
<div class="mk" style="left:627.0px;top:204.95px"></div>
<div class="mk" style="left:769.9px;top:204.95px"></div>
<div class="mk" style="left:923.1px;top:204.95px"></div>
<div class="mk mk2" style="left:124.5px;top:231.30px"></div>
<div class="mk" style="left:442.9px;top:231.30px"></div>
<div class="mk" style="left:627.0px;top:231.30px"></div>
<div class="mk" style="left:769.9px;top:231.30px"></div>
<div class="mk" style="left:923.1px;top:231.30px"></div>
<div class="mk mk2" style="left:124.5px;top:257.65px"></div>
<div class="mk" style="left:442.9px;top:257.65px"></div>
<div class="mk" style="left:627.0px;top:257.65px"></div>
<div class="mk" style="left:769.9px;top:257.65px"></div>
<div class="mk" style="left:923.1px;top:257.65px"></div>
<div class="mk mk2" style="left:124.5px;top:284.00px"></div>
<div class="mk" style="left:442.9px;top:284.00px"></div>
<div class="mk" style="left:627.0px;top:284.00px"></div>
<div class="mk" style="left:769.9px;top:284.00px"></div>
<div class="mk" style="left:923.1px;top:284.00px"></div>
<div class="mk mk2" style="left:124.5px;top:310.35px"></div>
<div class="mk" style="left:442.9px;top:310.35px"></div>
<div class="mk" style="left:627.0px;top:310.35px"></div>
<div class="mk" style="left:769.9px;top:310.35px"></div>
<div class="mk" style="left:923.1px;top:310.35px"></div>
<div class="mk mk2" style="left:124.5px;top:336.70px"></div>
<div class="mk" style="left:442.9px;top:336.70px"></div>
<div class="mk" style="left:627.0px;top:336.70px"></div>
<div class="mk" style="left:769.9px;top:336.70px"></div>
<div class="mk" style="left:923.1px;top:336.70px"></div>
<div class="mk mk2" style="left:124.5px;top:363.05px"></div>
<div class="mk" style="left:442.9px;top:363.05px"></div>
<div class="mk" style="left:627.0px;top:363.05px"></div>
<div class="mk" style="left:769.9px;top:363.05px"></div>
<div class="mk" style="left:923.1px;top:363.05px"></div>
<div class="mk mk2" style="left:124.5px;top:389.40px"></div>
<div class="mk" style="left:442.9px;top:389.40px"></div>
<div class="mk" style="left:627.0px;top:389.40px"></div>
<div class="mk" style="left:769.9px;top:389.40px"></div>
<div class="mk" style="left:923.1px;top:389.40px"></div>
<div class="mk mk2" style="left:124.5px;top:415.75px"></div>
<div class="mk" style="left:442.9px;top:415.75px"></div>
<div class="mk" style="left:627.0px;top:415.75px"></div>
<div class="mk" style="left:769.9px;top:415.75px"></div>
<div class="mk" style="left:923.1px;top:415.75px"></div>
<div class="mk mk2" style="left:124.5px;top:442.10px"></div>
<div class="mk" style="left:442.9px;top:442.10px"></div>
<div class="mk" style="left:627.0px;top:442.10px"></div>
<div class="mk" style="left:769.9px;top:442.10px"></div>
<div class="mk" style="left:923.1px;top:442.10px"></div>
<div class="mk mk2" style="left:124.5px;top:468.45px"></div>
<div class="mk" style="left:442.9px;top:468.45px"></div>
<div class="mk" style="left:627.0px;top:468.45px"></div>
<div class="mk" style="left:769.9px;top:468.45px"></div>
<div class="mk" style="left:923.1px;top:468.45px"></div>
</div>
<!-- selected cell -->
<div class="a" style="left:125.8px;top:94.5px;width:82px;height:34.5px;border:3px solid #f4bf45"></div>
<!-- scrollbars -->
<svg class="a" style="left:9px;top:499px" width="6" height="6" viewBox="0 0 6 6"><path d="M5 0.5 V5.5 L1 3Z" fill="#aaa"/></svg>
<svg class="a" style="left:1027px;top:499px" width="6" height="6" viewBox="0 0 6 6"><path d="M1 0.5 V5.5 L5 3Z" fill="#555"/></svg>
<svg class="a" style="left:1047px;top:8px" width="6" height="6" viewBox="0 0 6 6"><path d="M0.5 5 H5.5 L3 1Z" fill="#bbb"/></svg>
<svg class="a" style="left:1047px;top:480px" width="6" height="6" viewBox="0 0 6 6"><path d="M0.5 1 H5.5 L3 5Z" fill="#555"/></svg>
<div class="a" style="left:1046px;top:24px;width:8px;height:444px;background:#e2e2e2;border-radius:4px"></div>
<div class="a" style="left:1046px;top:24px;width:8px;height:78px;background:#9d9d9d;border-radius:4px"></div>
<div class="a" style="left:25px;top:498px;width:991px;height:8px;background:#e2e2e2;border-radius:4px"></div>
<div class="a" style="left:25px;top:498px;width:572px;height:8px;background:#9d9d9d;border-radius:4px"></div>
</div>

<div id="tblb" class="a"></div>
<!-- cursor -->
<svg class="a" style="left:735px;top:325px" width="60" height="60" viewBox="0 0 60 60">
<path d="M20.6 6.5 L40.0 6.5 L40.0 20.2 L53.8 20.2 L53.8 39.2 L40.0 39.2 L40.0 53.8 L20.6 53.8 L20.6 39.2 L6.9 39.2 L6.9 20.2 L20.6 20.2Z" fill="#000"/>
<path d="M17.6 3.5 L37.0 3.5 L37.0 17.2 L50.8 17.2 L50.8 36.2 L37.0 36.2 L37.0 50.8 L17.6 50.8 L17.6 36.2 L3.9 36.2 L3.9 17.2 L17.6 17.2Z" fill="#000"/>
<path d="M20.4 6.6 L34.4 6.6 L34.4 19.9 L47.8 19.9 L47.8 33.6 L34.4 33.6 L34.4 47.6 L20.4 47.6 L20.4 33.6 L7.0 33.6 L7.0 19.9 L20.4 19.9Z" fill="#fff"/>
</svg>
<!-- bottom area gradient -->
<div class="a" style="left:535px;top:734px;width:1140px;height:34px;background:linear-gradient(#fff,#fafafa 30%,#e7e6e8)"></div>
<div class="a" style="left:246px;top:715px;width:289px;height:53px;background:linear-gradient(rgba(0,0,0,0),rgba(60,40,0,.06))"></div>
<!-- bottom tabs -->
<div class="a" style="left:246px;top:768px;width:1429px;height:36px;background:linear-gradient(#dfdde0,#cfcdd0);border-top:1px solid #cbcacc"></div>
<div class="a" style="left:286px;top:769px;width:238px;height:35px;background:linear-gradient(#e3e2e4,#d4d3d5)"></div>
<div class="a" style="left:286px;top:769px;width:1px;height:35px;background:#bdbcbe"></div>
<div class="a" style="left:524px;top:769px;width:1px;height:35px;background:#bdbcbe"></div>
<div class="a" style="left:762px;top:769px;width:1px;height:35px;background:#bdbcbe"></div>
<div class="a" style="left:1000px;top:769px;width:1px;height:35px;background:#bdbcbe"></div>
<div class="a" style="left:1164px;top:769px;width:1px;height:35px;background:#bdbcbe"></div>
<div class="a" style="left:1402px;top:769px;width:1px;height:35px;background:#bdbcbe"></div>
<div class="a" style="left:1640px;top:769px;width:1px;height:35px;background:#bdbcbe"></div>
<div class="a" style="left:290px;top:799.6px;width:230px;height:2.6px;background:#3a9270"></div>
<svg class="a" style="left:257px;top:779px" width="16" height="15" viewBox="0 0 16 15"><path d="M8 1.5 L15 7.5 H13.3 V14 H9.6 V10.5 H6.4 V14 H2.7 V7.5 H1Z" fill="#454545"/></svg>
<div class="bt" style="left:299px">Умная Загрузка номенклату…</div>
<div class="bt" style="left:536px">МатериалПодошвы (Допол…</div>
<div class="bt" style="left:774px">Сезон (Дополнительный ре…</div>
<div class="bt" style="left:1012px">&lt;&gt; (Номенклатура)</div>
<div class="bt" style="left:1175px">Дополнительные реквизит…</div>
<div class="bt" style="left:1413px">Шаблоны слов для регуляр…</div>
<svg class="a bx" style="left:506px"><path d="M1 1 L9 9 M9 1 L1 9"/></svg>
<svg class="a bx" style="left:743px"><path d="M1 1 L9 9 M9 1 L1 9"/></svg>
<svg class="a bx" style="left:982px"><path d="M1 1 L9 9 M9 1 L1 9"/></svg>
<svg class="a bx" style="left:1145px"><path d="M1 1 L9 9 M9 1 L1 9"/></svg>
<svg class="a bx" style="left:1383px"><path d="M1 1 L9 9 M9 1 L1 9"/></svg>
<svg class="a bx" style="left:1622px"><path d="M1 1 L9 9 M9 1 L1 9"/></svg>
<svg class="a" style="left:1651px;top:783px" width="13" height="8" viewBox="0 0 13 8"><path d="M6.5 0.5 L12.5 7.5 H0.5Z" fill="#555"/></svg>

<!-- video controls -->
<div class="a" style="left:16px;top:776px;width:5px;height:13px;background:#fff;border-radius:1px"></div>
<div class="a" style="left:23px;top:776px;width:5px;height:13px;background:#fff;border-radius:1px"></div>
<div class="a" style="left:40px;top:780px;width:1671px;height:4px;border-radius:2px;background:rgba(255,255,255,.2)"></div>
<div class="a" style="left:1615px;top:780px;width:86px;height:4px;background:rgba(255,255,255,.4)"></div>
<div class="a" style="left:40px;top:780px;width:1575px;height:4px;border-radius:2px;background:#c24fc0"></div>
<div class="a" style="left:1609px;top:776px;width:12px;height:12px;border-radius:50%;background:#fff"></div>
<div class="a" style="left:1548px;top:745px;width:45px;height:21px;background:#fff;border-radius:4px;font-size:12.6px;color:#333;text-align:center;line-height:21px">33:25</div>
<div class="a" style="left:1566px;top:765px;width:0;height:0;border-left:4px solid transparent;border-right:4px solid transparent;border-top:4px solid #fff"></div>
<div class="a" style="left:1718px;top:774px;font-size:12.7px;color:#fff;white-space:nowrap">-02:00</div>
<svg class="a" style="left:1767px;top:775px" width="17" height="14" viewBox="0 0 17 14"><path d="M0.5 4.5 H3.5 L8 0.5 V13.5 L3.5 9.5 H0.5Z" fill="#fff"/><path d="M10.5 4.5 Q12 7 10.5 9.5" fill="none" stroke="#fff" stroke-width="1.6"/><path d="M13 2 Q16 7 13 12" fill="none" stroke="#fff" stroke-width="1.6"/></svg>
<div class="a" style="left:1792px;top:780px;width:52px;height:4px;border-radius:2px;background:#c24fc0"></div>
<div class="a" style="left:1838px;top:776px;width:12px;height:12px;border-radius:50%;background:#fff"></div>
<svg class="a" style="left:1862px;top:775px" width="15" height="15" viewBox="0 0 24 24"><path fill="#fff" d="M19.4 13a7.6 7.6 0 0 0 0-2l2.1-1.6-2-3.5-2.5 1a7.4 7.4 0 0 0-1.7-1L15 3.2h-4l-.4 2.7a7.4 7.4 0 0 0-1.7 1l-2.5-1-2 3.5L6.6 11a7.6 7.6 0 0 0 0 2l-2.1 1.6 2 3.5 2.5-1a7.4 7.4 0 0 0 1.7 1l.4 2.7h4l.4-2.7a7.4 7.4 0 0 0 1.7-1l2.5 1 2-3.5ZM13 15.5a3.5 3.5 0 1 1 0-7 3.5 3.5 0 0 1 0 7Z" transform="translate(-1 0)"/></svg>
<svg class="a" style="left:1890px;top:774px" width="16" height="16" viewBox="0 0 16 16" fill="none" stroke="#fff" stroke-width="1.8"><path d="M15 1 L9.5 6.5"/><path d="M9.5 2 V6.5 H14"/><path d="M1 15 L6.5 9.5"/><path d="M2 9.5 H6.5 V14"/></svg>
</body></html>
